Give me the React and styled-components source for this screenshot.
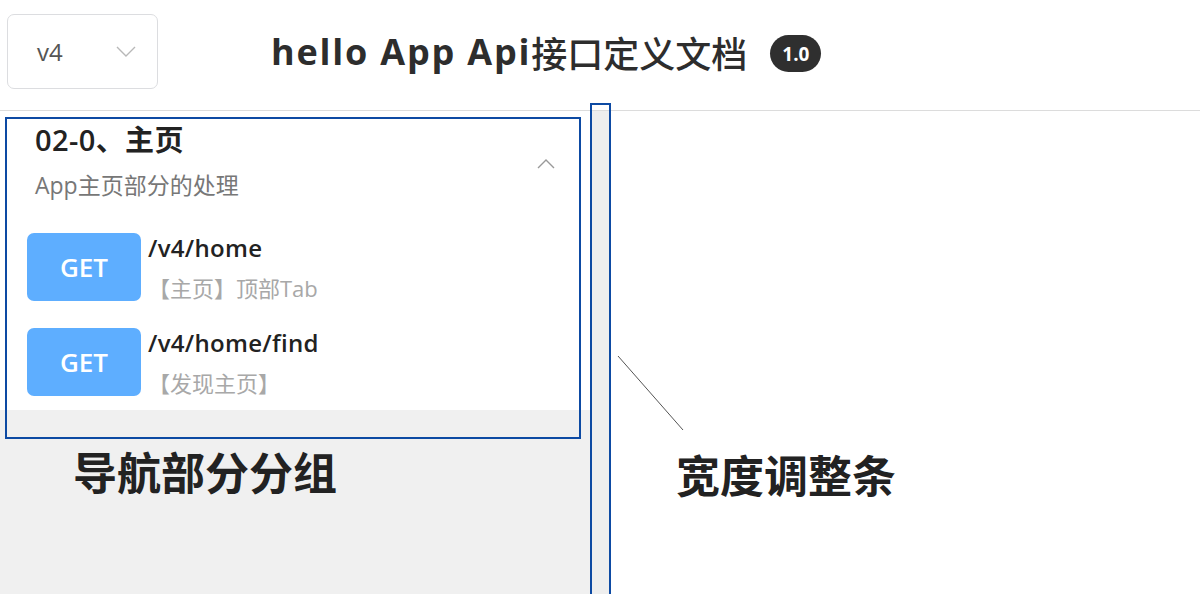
import React from "react";
import styled, { createGlobalStyle } from "styled-components";

const Global = createGlobalStyle`
  html, body { margin: 0; padding: 0; background: #fff; }
  body { font-family: "Open Sans", "Noto Sans CJK SC", sans-serif; color: #222; }
  * { box-sizing: border-box; }
`;

const Page = styled.div`
  position: relative;
  width: 1200px;
  height: 594px;
  display: flex;
  flex-direction: column;
  overflow: hidden;
`;

const Header = styled.header`
  height: 111px;
  flex: none;
  display: flex;
  align-items: center;
  border-bottom: 1px solid #dcdcdc;
  padding-left: 7px;
`;

const Select = styled.div`
  width: 151px;
  height: 75px;
  margin-top: -7px;
  border: 1.5px solid #dcdde0;
  border-radius: 7px;
  display: flex;
  align-items: center;
  justify-content: space-between;
  padding: 0 21px 0 29px;
  font-size: 24px;
  color: #555;
`;

const Title = styled.h1`
  margin: -7px 0 0 113px;
  font-size: 36px;
  font-weight: 700;
  color: #2d2d2d;
  display: flex;
  align-items: center;
`;

const Latin = styled.span`
  font-family: "Open Sans", sans-serif;
  font-weight: 700;
  letter-spacing: 1.8px;
`;

const Cjk = styled.span`
  font-family: "Noto Sans CJK SC", sans-serif;
  font-weight: 500;
`;

const Badge = styled.span`
  margin-left: 23px;
  height: 37px;
  padding: 0 12px;
  border-radius: 19px;
  background: #2f2f2f;
  color: #fff;
  font-size: 19px;
  font-weight: 700;
  display: inline-flex;
  align-items: center;
  margin-top: 4px;
`;

const Body = styled.div`
  flex: 1;
  display: flex;
`;

const Sidebar = styled.aside`
  width: 591px;
  flex: none;
  background: #f0f0f0;
  display: flex;
  flex-direction: column;
`;

const Group = styled.section`
  background: #fff;
  padding: 10px 0 12px 0;
`;

const GroupHead = styled.div`
  display: flex;
  justify-content: space-between;
  padding: 0 36px 0 35px;
`;

const GroupTitle = styled.div`
  font-size: 29px;
  font-weight: 600;
  letter-spacing: 0.4px;
  color: #222;
  line-height: 38px;
`;

const GroupDesc = styled.div`
  font-size: 23px;
  color: #777;
  line-height: 30px;
  margin-top: 11px;
`;

const Chevron = styled.svg`
  margin-top: 38px;
  flex: none;
`;

const ApiRow = styled.div`
  display: flex;
  align-items: flex-start;
  padding: 0 0 0 27px;
  margin-top: ${(p) => p.$mt}px;
`;

const Method = styled.div`
  width: 114px;
  height: 68px;
  border-radius: 7px;
  background: #5eaeff;
  color: #fff;
  font-size: 26px;
  font-weight: 600;
  display: flex;
  align-items: center;
  justify-content: center;
  flex: none;
`;

const ApiText = styled.div`
  margin-left: 7px;
  display: flex;
  flex-direction: column;
`;

const ApiPath = styled.div`
  font-size: 24px;
  color: #222;
  line-height: 30px;
  font-weight: 600;
  letter-spacing: 0.3px;
`;

const ApiDesc = styled.div`
  font-size: 22px;
  color: #a8a8a8;
  line-height: 30px;
  margin-top: 10px;
`;

const Label = styled.div`
  font-size: 44px;
  font-weight: 700;
  color: #222;
  line-height: 50px;
  margin: ${(p) => p.$m};
  font-family: "Noto Sans CJK SC", sans-serif;
`;

const Resizer = styled.div`
  width: 20px;
  flex: none;
  background: #eeeeee;
`;

const Main = styled.main`
  flex: 1;
  display: flex;
  flex-direction: column;
`;

const Outline = styled.div`
  position: absolute;
  border: 2px solid #0d4aa3;
  left: ${(p) => p.$l}px;
  top: ${(p) => p.$t}px;
  width: ${(p) => p.$w}px;
  height: ${(p) => p.$h}px;
  pointer-events: none;
`;

const Pointer = styled.svg`
  position: absolute;
  left: 0;
  top: 0;
  pointer-events: none;
`;

export default function App() {
  return (
    <Page>
      <Global />
      <Header>
        <Select>
          <span>v4</span>
          <svg width="20" height="11" viewBox="0 0 20 11">
            <path d="M1 1 L10 10 L19 1" fill="none" stroke="#b8b8b8" strokeWidth="1.4" />
          </svg>
        </Select>
        <Title>
          <Latin>hello App Api</Latin>
          <Cjk>接口定义文档</Cjk>
          <Badge>1.0</Badge>
        </Title>
      </Header>
      <Body>
        <Sidebar>
          <Group>
            <GroupHead>
              <div>
                <GroupTitle>02-0、主页</GroupTitle>
                <GroupDesc>App主页部分的处理</GroupDesc>
              </div>
              <Chevron width="18" height="10" viewBox="0 0 18 10">
                <path d="M1 9 L9 1 L17 9" fill="none" stroke="#999" strokeWidth="1.4" />
              </Chevron>
            </GroupHead>
            <ApiRow $mt={33}>
              <Method>GET</Method>
              <ApiText>
                <ApiPath>/v4/home</ApiPath>
                <ApiDesc>【主页】顶部Tab</ApiDesc>
              </ApiText>
            </ApiRow>
            <ApiRow $mt={25}>
              <Method>GET</Method>
              <ApiText>
                <ApiPath>/v4/home/find</ApiPath>
                <ApiDesc>【发现主页】</ApiDesc>
              </ApiText>
            </ApiRow>
          </Group>
          <Label $m="36px 0 0 73px">导航部分分组</Label>
        </Sidebar>
        <Resizer />
        <Main>
          <Label $m="338px 0 0 65px">宽度调整条</Label>
        </Main>
      </Body>
      <Outline $l={5} $t={117} $w={576} $h={322} />
      <Outline $l={590} $t={103} $w={21} $h={500} />
      <Pointer width="1200" height="594">
        <line x1="618" y1="356" x2="683" y2="430" stroke="#555" strokeWidth="1" />
      </Pointer>
    </Page>
  );
}
